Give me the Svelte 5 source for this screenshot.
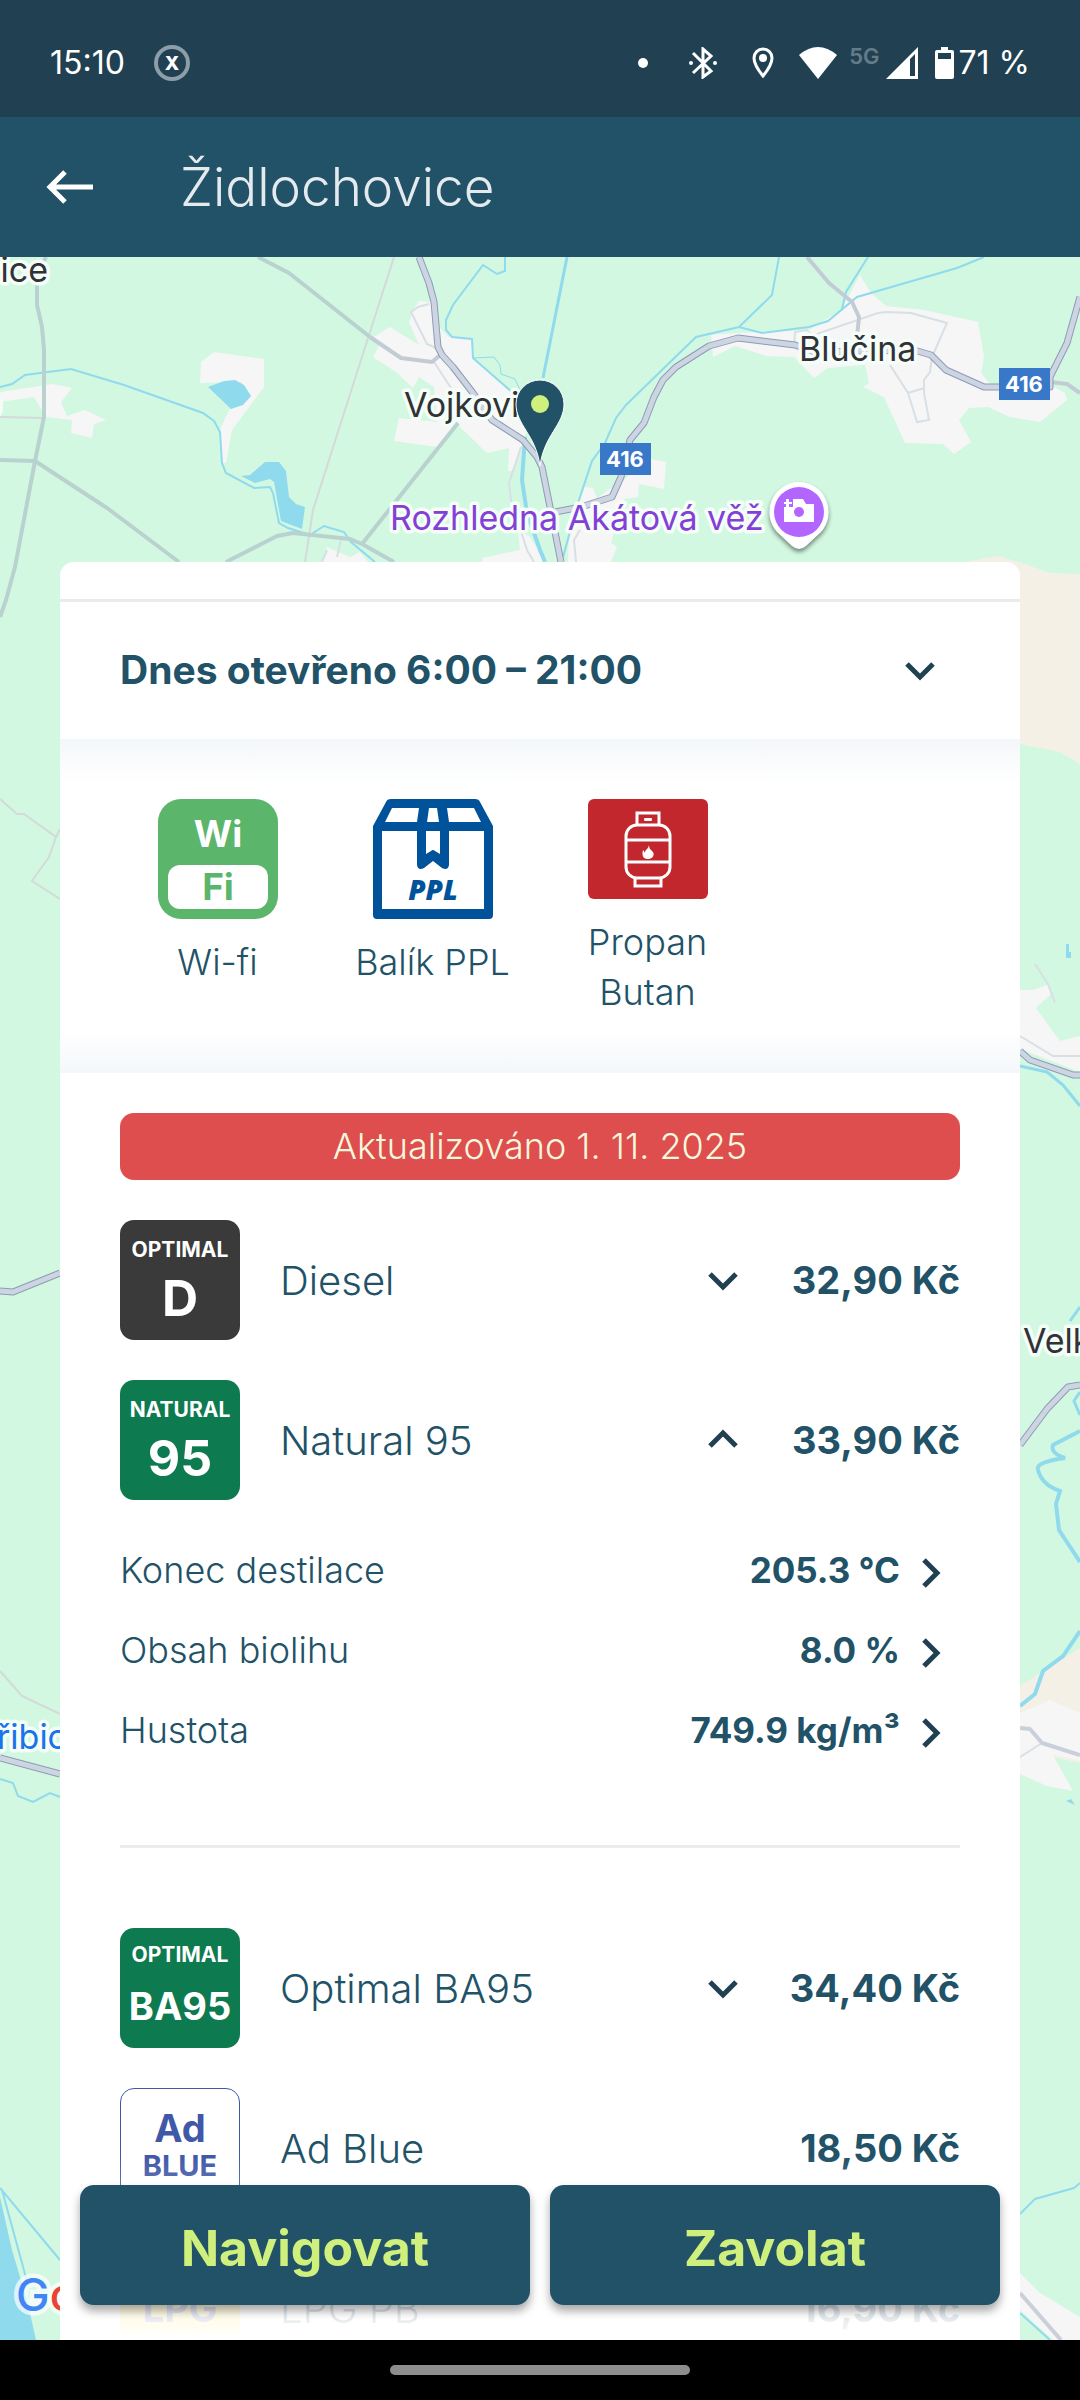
<script>
    const services = [
        { id: "wifi", label: "Wi-fi" },
        { id: "ppl", label: "Balík PPL" },
        { id: "propan", label: "Propan Butan" },
    ];

    const fuels = [
        { id: "diesel", name: "Diesel", price: "32,90 Kč", top: "OPTIMAL", main: "D", tone: "dark", expandable: true, details: [] },
        {
            id: "natural",
            name: "Natural 95",
            price: "33,90 Kč",
            top: "NATURAL",
            main: "95",
            tone: "green",
            expandable: true,
            details: [
                { label: "Konec destilace", value: "205.3 °C" },
                { label: "Obsah biolihu", value: "8.0 %" },
                { label: "Hustota", value: "749.9 kg/m³" },
            ],
        },
        { id: "ba95", name: "Optimal BA95", price: "34,40 Kč", top: "OPTIMAL", main: "BA95", tone: "green small", expandable: true, details: [] },
        { id: "adblue", name: "Ad Blue", price: "18,50 Kč", top: "Ad", main: "BLUE", tone: "adblue", expandable: false, details: [] },
        { id: "lpg", name: "LPG PB", price: "16,90 Kč", top: "", main: "LPG", tone: "lpg", expandable: false, details: [] },
    ];

    let openFuel = $state("natural");

    function toggle(id) {
        openFuel = openFuel === id ? null : id;
    }
</script>

{#snippet chevron(direction)}
    <svg class="chevron {direction}" viewBox="0 0 40 40" aria-hidden="true">
        <path d="M7 14 L20 27 L33 14" fill="none" stroke="#214152" stroke-width="5" />
    </svg>
{/snippet}

<div class="app">
    <div class="status">
        <span class="time">15:10</span>
        <svg class="badge-x" width="38" height="38" viewBox="0 0 38 38">
            <circle cx="19" cy="19" r="16" fill="none" stroke="#8c9ea8" stroke-width="4" />
            <text x="19" y="26" text-anchor="middle" font-size="19" font-weight="800" fill="#fff">X</text>
        </svg>
        <div class="status-icons">
            <svg class="dot" width="10" height="10" viewBox="0 0 10 10"><circle cx="5" cy="5" r="5" fill="#fff" /></svg>
            <svg class="bluetooth" width="28" height="32" viewBox="0 0 28 32">
                <path d="M4 6 L22 24 L14 30 V2 L22 9 L4 26" fill="none" stroke="#fff" stroke-width="3" />
                <circle cx="2" cy="16" r="2" fill="#fff" />
                <circle cx="26" cy="16" r="2" fill="#fff" />
            </svg>
            <svg class="place" width="22" height="32" viewBox="0 0 22 32">
                <path d="M11 2 C6 2 2 6 2 11 C2 18 11 29 11 29 C11 29 20 18 20 11 C20 6 16 2 11 2 Z" fill="none" stroke="#fff" stroke-width="3" />
                <circle cx="11" cy="11" r="4" fill="#fff" />
            </svg>
            <svg class="wifi" width="38" height="32" viewBox="0 0 38 32"><path d="M0 8 Q19 -8 38 8 L19 32 Z" fill="#fff" /></svg>
            <span class="network">5G</span>
            <svg class="signal" width="32" height="32" viewBox="0 0 32 32">
                <path d="M0 32 L32 0 V32 Z M24 12 V29 H29 V7 Z" fill="#fff" fill-rule="evenodd" />
            </svg>
            <svg class="battery" width="19" height="32" viewBox="0 0 19 32">
                <path d="M6 0 H13 V3 H17 Q19 3 19 5 V30 Q19 32 17 32 H2 Q0 32 0 30 V5 Q0 3 2 3 H6 Z M3 6 V12 H16 V6 Z" fill="#fff" fill-rule="evenodd" />
            </svg>
            <span class="percent">71 %</span>
        </div>
    </div>

    <header class="toolbar">
        <button class="back" aria-label="Zpět">
            <svg width="48" height="36" viewBox="0 0 48 36">
                <path d="M47 18 H5 M19 3 L4 18 L19 33" fill="none" stroke="#fff" stroke-width="5" />
            </svg>
        </button>
        <h1>Židlochovice</h1>
    </header>

    <main>
        <svg class="map" viewBox="0 257 1080 2083" preserveAspectRatio="xMidYMin slice">
            <rect y="257" width="1080" height="2083" fill="#d2f8e1" />
            <g fill="#f5f0e5">
                <path d="M964 562 L998 556 1022 563 1050 573 1080 574 V764 L1060 752 1020 744 960 740 Z" />
                <path d="M1020 1686 L1080 1648 V1763 L1053 1757 1020 1710 Z" />
            </g>
            <g fill="#f6f6f6">
                <path d="M200 383 L201 362 214 352 264 359 264 387 232 430 226 463 222 463 220 430 229 410 251 397 241 382 Z" />
                <path d="M0 392 L53 384 72 388 61 402 67 416 85 410 106 420 94 424 92 438 71 433 72 420 46 417 34 397 0 402 Z" />
                <path d="M373 357 L380 344 374 337 390 327 419 345 409 322 413 310 419 301 435 303 439 327 449 337 473 338 473 358 513 393 527 430 513 471 508 471 509 448 487 453 458 425 437 447 394 441 399 418 437 422 434 387 419 377 413 388 396 372 Z" />
                <path d="M482 558 L520 550 518 530 530 537 540 553 546 562 482 562 Z M322 562 L327 547 350 557 360 552 368 562 Z" />
                <path d="M711 335 L738 333 809 330 841 310 860 275 871 293 886 306 924 310 978 322 984 357 981 373 991 385 1050 385 1065 393 1067 400 1040 422 1010 417 988 407 969 408 959 420 971 442 954 454 943 444 905 443 884 397 863 387 869 383 865 365 828 368 814 378 794 357 766 356 735 346 713 357 Z" />
                <path d="M651 459 L666 462 664 489 639 484 638 497 624 499 611 543 617 547 611 562 568 562 569 530 585 487 593 488 597 498 623 480 Z" />
                <path d="M1020 990 L1033 990 1047 985 1051 994 1036 1008 1060 1041 1080 1036 V1072 L1020 1049 Z" />
                <path d="M1020 1713 L1050 1700 1080 1713 V1760 L1053 1755 1073 1791 1047 1786 1020 1774 Z" />
                <path d="M1020 2273 L1040 2293 1080 2317 V2340 H1053 L1020 2310 Z" />
            </g>
            <g fill="#90daee">
                <path d="M208 387 L224 381 235 380 244 385 251 396 243 405 231 409 Z" />
                <path d="M241 476 L250 475 265 462 279 462 286 471 289 497 296 504 305 507 302 529 281 521 274 482 270 479 255 483 Z" />
                <path d="M0 2197 L12 2250 27 2300 36 2340 H0 Z M1066 944 H1069 V952 H1071 V958 H1066 Z M1066 1801 L1071 1799 1075 1805 Z" />
            </g>
            <g fill="none" stroke="#90daee" stroke-width="2">
                <path d="M0 387 L12 384 25 375 71 369 124 385 203 413 214 421 220 432 222 463 226 473 254 488 270 487 273 493 279 523 288 528 310 535 324 526 344 532 351 542 375 562" />
                <path d="M505 257 V271 L497 274 483 265 453 305 446 320 446 330 452 337 472 339 473 358 513 393" />
                <path d="M473 358 L494 357 500 365 501 374 515 379 520 390" stroke-width="1" />
                <path d="M567 257 L543 378" stroke-width="3" />
                <path d="M525 437 L522 480 527 513 540 550 545 562" stroke-width="4" />
                <path d="M779 257 L772 295 739 327 M868 257 L846 292 842 309" />
                <path d="M984 257 L957 268 857 297 828 321 809 327 762 333 739 327 696 337 626 405 616 418 605 443 592 461 578 503 563 557" />
                <path d="M1020 1066 L1047 1072 1063 1085 1080 1106 M1080 1307 L1070 1321 M1080 1392 L1074 1401 1080 1415" stroke-width="3" />
                <path d="M1080 1431 L1053 1445 Q1050 1453 1065 1458 Q1035 1462 1038 1470 Q1042 1485 1060 1491 L1056 1504 1059 1530 1080 1562" stroke-width="4" />
                <path d="M1080 1631 L1063 1656 1043 1671 1035 1694 1020 1706" stroke-width="4" />
                <path d="M1020 2214 L1035 2199 1074 2188 1080 2183 M1020 2313 L1050 2340" />
                <path d="M0 1779 L13 1783 18 1796 33 1802 50 1793 60 1797 M0 2188 L60 2260 M2 2190 L28 2285" />
            </g>
            <g fill="none" stroke="#d8dfe5" stroke-width="2">
                <path d="M394 257 L313 510 305 562 M0 417 L44 418 M0 799 L17 814 24 814 56 837 60 829 M56 837 L49 857 32 881 60 899 M0 1671 L22 1696 60 1714" stroke="#d3dad9" />
                <path d="M794 345 L795 332 806 330 814 335 878 313 886 312 911 313 947 323 932 357 930 372 924 380 924 393 929 420 917 422 908 393 890 365 M908 393 L924 388" />
                <path d="M429 304 L418 307 411 312 427 344 436 348 M434 362 L451 388 M521 447 L509 483 511 500 527 550 534 562 M322 562 L327 550 M341 540 L337 557 M576 562 L574 540 580 530" />
                <path d="M1035 964 L1048 984 1055 1003 M1020 1036 L1053 1056 H1080 M1020 1757 L1042 1743" />
            </g>
            <g fill="none" stroke="#b9d2cf" stroke-width="4" stroke-linejoin="round">
                <path d="M46 257 L37 275 V305 L42 327 44 350 V417 L35 461 15 567 6 600 0 617" />
                <path d="M0 460 L35 461 107 508 179 562 M258 257 L289 273 370 337" />
                <path d="M226 562 L277 536 293 533 350 539 362 544 394 562 M362 544 L458 423" />
                <path d="M370 337 L401 358 432 362 439 356 M857 337 L859 317 852 302 829 283 807 257 M1050 382 L1067 384 1080 393" stroke="#c3ccd4" />
                <path d="M1020 1728 L1030 1729 1042 1743 1080 1755 M1020 2293 L1061 2340" stroke="#c9d0da" />
            </g>
            <g fill="none" stroke-linejoin="round">
                {#each [["#8e9bb5", 7], ["#cdd5e2", 5]] as [stroke, width]}
                    <g {stroke} stroke-width={width}>
                        <path d="M419 257 L429 283 434 302 438 347 442 355 453 367 473 393 492 420 523 440 537 457 542 467 561 562" />
                        <path d="M555 512 L581 507 612 497 621 477 630 440 644 423 654 397 663 380 676 367 709 346 738 338 795 345 815 352 914 350 931 355 946 370 984 387 1050 387 1050 377 1067 343 1080 297" />
                        <path d="M1020 1051 L1030 1060 1073 1075 1080 1075 M1020 1445 L1047 1409 1068 1387 1080 1385 M0 1291 L13 1292 60 1273 M0 1758 L60 1774" />
                    </g>
                {/each}
            </g>
            <g class="labels">
                <text x="48" y="282" text-anchor="end">vice</text>
                <text x="1" y="415" text-anchor="end">e</text>
                <text x="404" y="417">Vojkovi</text>
                <text x="799" y="361">Blučina</text>
                <text x="1023" y="1353">Velk</text>
                <text x="-3" y="1749" class="rail">řibic</text>
                <text x="390" y="530" class="poi">Rozhledna Akátová věž</text>
            </g>
            <g class="road-sign">
                <rect x="600" y="443" width="51" height="32" />
                <text x="625" y="467">416</text>
                <rect x="999" y="368" width="51" height="32" />
                <text x="1024" y="392">416</text>
            </g>
            <path d="M540 466 C536 435 516 425 516 404 A24 24 0 0 1 564 404 C564 425 544 435 540 466 Z" fill="#215267" stroke="#fff" stroke-width="1" />
            <circle cx="540" cy="404" r="9" fill="#d0f07d" />
            <g class="poi-pin">
                <path d="M799 482 A30 30 0 0 1 821 532 L806 546 Q799 552 792 546 L777 532 A30 30 0 0 1 799 482 Z" fill="#fff" />
                <circle cx="799" cy="512" r="25" fill="#b366ff" />
                <path d="M784 507 H793 V499 H803 L806 504 H814 V522 H784 Z M786 499 H789 V502 H792 V504 H789 V507 H786 V504 H784 V502 H786 Z" fill="#fff" />
                <circle cx="799" cy="512" r="5" fill="#b366ff" />
            </g>
            <text class="google" x="16" y="2311"><tspan fill="#4285f4">G</tspan><tspan fill="#ea4335">o</tspan></text>
        </svg>

        <section class="card">
            <button class="hours">
                <span>Dnes otevřeno 6:00 – 21:00</span>
                {@render chevron("down")}
            </button>

            <ul class="services">
                {#each services as service (service.id)}
                    <li>
                        {#if service.id === "wifi"}
                            <svg width="120" height="120" viewBox="0 0 120 120">
                                <rect width="120" height="120" rx="23" fill="#5bb56a" />
                                <rect x="10" y="66" width="100" height="44" rx="12" fill="#fff" />
                                <text x="60" y="48" text-anchor="middle" font-size="37" font-weight="700" fill="#fff">Wi</text>
                                <text x="60" y="101" text-anchor="middle" font-size="37" font-weight="700" fill="#5bb56a">Fi</text>
                            </svg>
                        {:else if service.id === "ppl"}
                            <svg width="120" height="120" viewBox="0 0 120 120">
                                <path d="M18 0 H102 Q106 0 107 3 L120 27 V116 Q120 120 116 120 H4 Q0 120 0 116 V27 L13 3 Q14 0 18 0 Z" fill="#00529b" />
                                <path d="M19 9 H46 L44 23 H12 Z M56 9 H64 L66 23 H54 Z M74 9 H101 L108 23 H76 Z M9 32 H111 V110 H9 Z" fill="#fff" />
                                <path d="M44 30 V66 Q45 72 51 69 L60 62 69 69 Q75 72 76 66 V30 Z" fill="#00529b" />
                                <path d="M53 32 H67 V55 L62 52 Q60 50 58 52 L53 55 Z" fill="#fff" />
                                <text class="ppl" x="60" y="101" text-anchor="middle" fill="#00529b">PPL</text>
                            </svg>
                        {:else}
                            <svg width="120" height="100" viewBox="0 0 120 100">
                                <rect width="120" height="100" rx="6" fill="#c1272d" />
                                <g fill="none" stroke="#fff" stroke-width="3">
                                    <path d="M49 26 V14 H71 V26" />
                                    <rect x="38" y="26" width="44" height="53" rx="11" />
                                    <path d="M38 41 H82 M38 63 H82 M47 79 V87 H73 V79" />
                                </g>
                                <rect x="56" y="19" width="8" height="3" rx="1" fill="#fff" />
                                <path d="M61 46 C60 51 57 50 57 54 Q56 52 55 51 C54 55 54 60 60 60 C66 60 67 54 64 52 C62 50 61 49 61 46 Z" fill="#fff" />
                            </svg>
                        {/if}
                        <span>{service.label}</span>
                    </li>
                {/each}
            </ul>

            <div class="prices">
                <p class="updated">Aktualizováno 1. 11. 2025</p>
                {#each fuels as fuel (fuel.id)}
                    <div class="fuel">
                        <div class="tile {fuel.tone}">
                            {#if fuel.top}<span class="tile-top">{fuel.top}</span>{/if}
                            <strong>{fuel.main}</strong>
                        </div>
                        <span class="name">{fuel.name}</span>
                        {#if fuel.expandable}
                            <button class="toggle" aria-label={fuel.name} aria-expanded={openFuel === fuel.id} onclick={() => toggle(fuel.id)}>
                                {@render chevron(openFuel === fuel.id ? "up" : "down")}
                            </button>
                        {/if}
                        <span class="price">{fuel.price}</span>
                    </div>
                    {#if openFuel === fuel.id && fuel.details.length}
                        <div class="details">
                            {#each fuel.details as detail}
                                <button class="detail">
                                    <span>{detail.label}</span>
                                    <strong>{detail.value}</strong>
                                    {@render chevron("right")}
                                </button>
                            {/each}
                        </div>
                    {/if}
                {/each}
            </div>
        </section>

        <div class="actions">
            <button>Navigovat</button>
            <button>Zavolat</button>
        </div>
    </main>

    <div class="system-nav"><span></span></div>
</div>

<style>
    :global(body) {
        margin: 0;
    }

    .app {
        display: flex;
        flex-direction: column;
        height: 100vh;
        overflow: hidden;
        font-family: Inter, "Open Sans", sans-serif;
        color: #215267;
    }

    button {
        border: 0;
        padding: 0;
        background: none;
        font: inherit;
        color: inherit;
        cursor: pointer;
    }

    .status {
        display: flex;
        align-items: center;
        box-sizing: border-box;
        height: 117px;
        padding: 8px 50px 0;
        background: #214152;
        color: #fff;
        flex: none;
    }

    .time {
        font-size: 32px;
    }

    .badge-x {
        margin-left: 28px;
    }

    .status-icons {
        display: flex;
        align-items: center;
        margin-left: auto;
    }

    .bluetooth {
        margin-left: 41px;
    }

    .place {
        margin-left: 35px;
    }

    .wifi {
        margin-left: 25px;
    }

    .network {
        margin: 0 7px 14px 12px;
        color: #647b88;
        font-size: 22px;
        font-weight: 600;
        line-height: 22px;
    }

    .battery {
        margin: 0 4px 0 17px;
    }

    .percent {
        font-size: 32px;
    }

    .toolbar {
        display: flex;
        align-items: center;
        height: 140px;
        padding: 0 46px;
        background: #215267;
        flex: none;
    }

    .back {
        display: flex;
    }

    h1 {
        margin: 0 0 0 86px;
        color: #e4eaed;
        font-size: 53px;
        font-weight: 300;
    }

    main {
        position: relative;
        flex: 1;
        min-height: 0;
        overflow: hidden;
    }

    .map {
        position: absolute;
        inset: 0;
        width: 100%;
        height: 100%;
    }

    .labels text {
        fill: #303236;
        stroke: #f4fdf8;
        stroke-width: 7px;
        stroke-linejoin: round;
        paint-order: stroke;
        font-size: 34px;
    }

    .labels .rail {
        fill: #1a73e8;
    }

    .labels .poi {
        fill: #8440d6;
    }

    .road-sign rect {
        fill: #3977c8;
    }

    .road-sign text {
        fill: #fff;
        font-size: 22px;
        font-weight: 700;
        text-anchor: middle;
    }

    .poi-pin {
        filter: drop-shadow(0 3px 2px rgba(0, 0, 0, 0.45));
    }

    .google {
        stroke: rgba(255, 255, 255, 0.7);
        stroke-width: 9px;
        paint-order: stroke;
        font-size: 45px;
        font-weight: 500;
    }

    .card {
        position: relative;
        margin: 305px 60px 0;
        padding-top: 37px;
        border-radius: 14px 14px 0 0;
        background: #fff;
    }

    .hours {
        display: flex;
        align-items: center;
        justify-content: space-between;
        box-sizing: border-box;
        width: 100%;
        height: 140px;
        padding: 0 80px 2px 60px;
        border-top: 3px solid #e9ecec;
        font-size: 39px;
        font-weight: 700;
    }

    .chevron {
        display: block;
        width: 40px;
        height: 40px;
        flex: none;
    }

    .chevron.up {
        transform: rotate(180deg);
    }

    .chevron.right {
        transform: rotate(-90deg);
    }

    .services {
        display: grid;
        grid-template-columns: repeat(4, 1fr);
        margin: 0;
        padding: 60px 50px 56px;
        list-style: none;
        background: linear-gradient(#f4f7fa, #fff 44px, #fff calc(100% - 44px), #f4f7fa);
    }

    .services li {
        display: flex;
        flex-direction: column;
        align-items: center;
        gap: 18px;
        font-size: 36px;
        font-weight: 300;
        line-height: 50px;
        text-align: center;
    }

    .services span {
        padding: 0 20px;
    }

    .ppl {
        font-family: "Open Sans", sans-serif;
        font-size: 28px;
        font-style: italic;
        font-weight: 800;
    }

    .prices {
        display: flex;
        flex-direction: column;
        gap: 40px;
        padding: 40px 60px;
    }

    .updated {
        margin: 0;
        border-radius: 14px;
        background: #de4e4e;
        color: #f4f8dc;
        font-size: 36px;
        font-weight: 300;
        line-height: 67px;
        text-align: center;
    }

    .fuel {
        display: flex;
        align-items: center;
        font-size: 38px;
    }

    .tile {
        display: flex;
        flex-direction: column;
        align-items: center;
        justify-content: center;
        box-sizing: border-box;
        width: 120px;
        height: 120px;
        border-radius: 14px;
        color: #fff;
        font-size: 50px;
        line-height: 60px;
    }

    .tile-top {
        font-size: 21px;
        font-weight: 700;
        line-height: 36px;
    }

    .dark {
        background: #3a3a3a;
    }

    .green {
        background: #0e7a50;
    }

    .small {
        font-size: 38px;
        line-height: 66px;
    }

    .adblue {
        border: 1px solid #3f58a8;
        color: #3f58a8;
        font-size: 29px;
        line-height: 40px;
    }

    .adblue .tile-top {
        font-size: 38px;
    }

    .lpg {
        background: #ffe650;
        color: #3f4a94;
        font-size: 38px;
    }

    .name {
        flex: 1;
        margin-left: 40px;
        font-size: 40px;
        font-weight: 300;
    }

    .price {
        width: 217px;
        font-weight: 700;
        text-align: right;
        white-space: nowrap;
    }

    .details {
        margin-top: -10px;
        padding-bottom: 75px;
        border-bottom: 3px solid #e9ecec;
        margin-bottom: 40px;
    }

    .detail {
        display: flex;
        align-items: center;
        width: 100%;
        height: 80px;
        padding-right: 10px;
        font-size: 36px;
        font-weight: 300;
    }

    .detail strong {
        margin: 0 10px 0 auto;
        font-size: 35px;
        font-weight: 700;
    }

    .detail .chevron,
    .detail :global(.chevron) {
        margin-top: 6px;
    }

    .actions {
        position: absolute;
        inset: auto 60px 0;
        display: flex;
        gap: 20px;
        padding: 30px 20px 35px;
        background: linear-gradient(rgba(255, 255, 255, 0), #fff);
    }

    .actions button {
        flex: 1;
        height: 120px;
        padding-top: 6px;
        border-radius: 14px;
        background: #215267;
        box-shadow: 0 6px 10px rgba(0, 0, 0, 0.35);
        color: #d0f07d;
        font-size: 50px;
        font-weight: 700;
    }

    .system-nav {
        display: flex;
        align-items: center;
        justify-content: center;
        height: 60px;
        background: #000;
        flex: none;
    }

    .system-nav span {
        width: 300px;
        height: 10px;
        border-radius: 5px;
        background: #8e8e8e;
    }
</style>
